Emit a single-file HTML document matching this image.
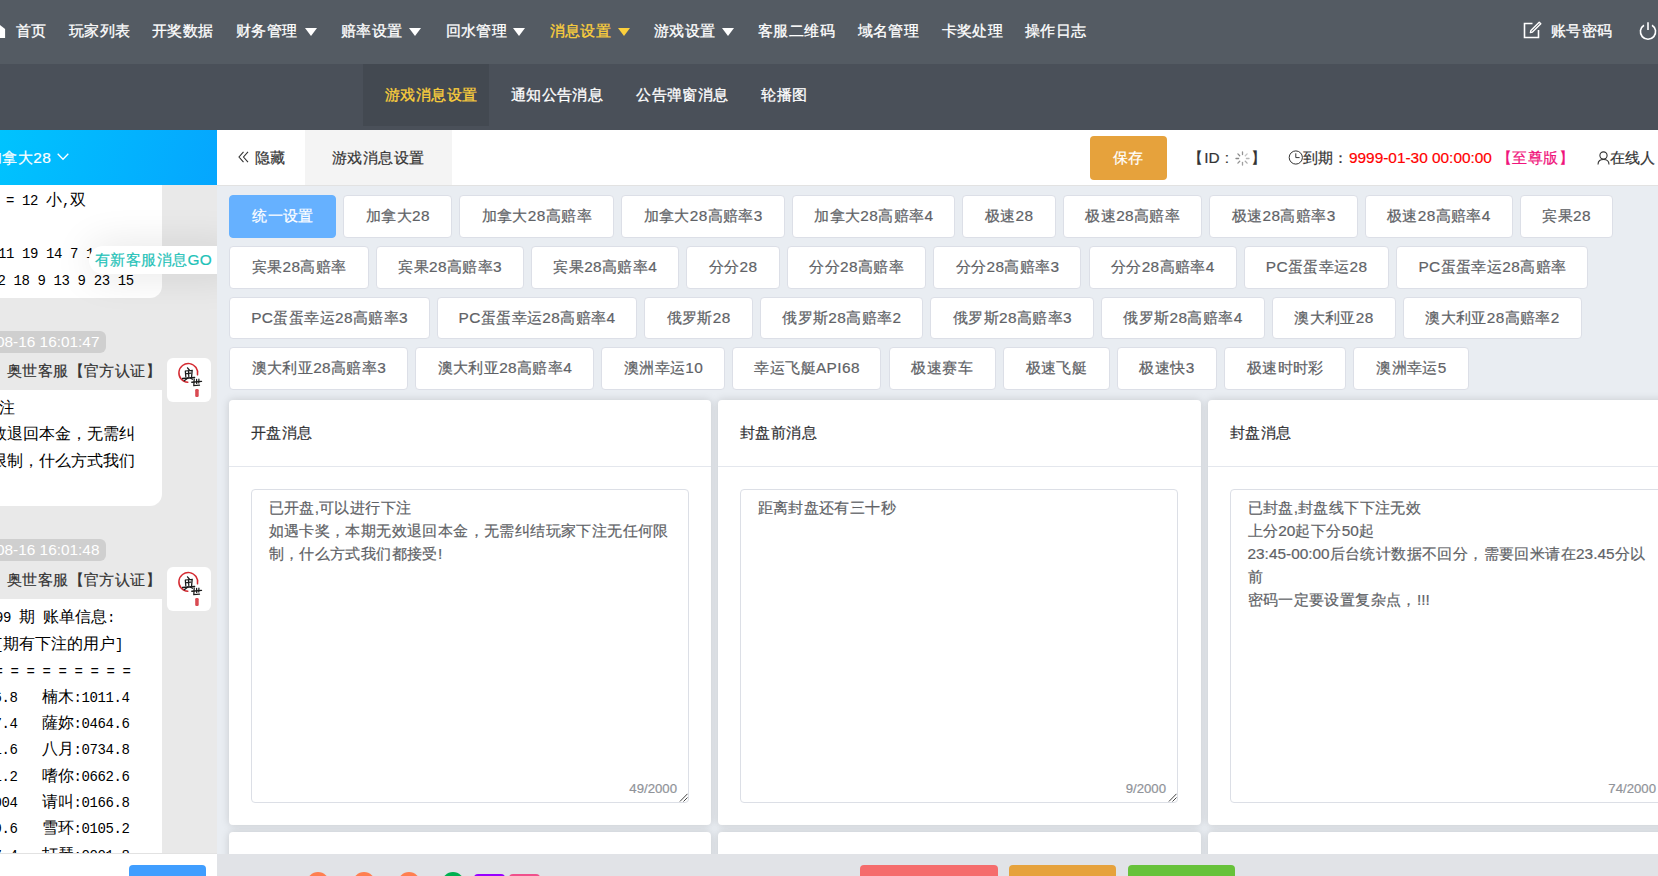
<!DOCTYPE html>
<html><head><meta charset="utf-8">
<style>
*{box-sizing:border-box;margin:0;padding:0}
html,body{width:1658px;height:876px;overflow:hidden;background:#e9edf2;font-family:"Liberation Sans",sans-serif;font-size:15.4px;color:#333;-webkit-text-stroke:0.2px currentColor}
.ml{-webkit-text-stroke:0}
.abs{position:absolute;white-space:nowrap}
.ls{letter-spacing:0.4px}
#top{position:absolute;left:0;top:0;width:1658px;height:64px;background:#545b63}
.nv{position:absolute;top:20px;color:#fff;font-size:15.4px;-webkit-text-stroke:0.3px currentColor;line-height:22px;white-space:nowrap;letter-spacing:0.4px}
.nv.on{color:#fcd03c}
.tri{position:absolute;top:28px;width:0;height:0;border-left:6.5px solid transparent;border-right:6.5px solid transparent;border-top:8px solid #fff}
.tri.on{border-top-color:#fcd03c}
#sub{position:absolute;left:0;top:64px;width:1658px;height:66px;background:#4a5059}
#left{position:absolute;left:0;top:130px;width:217px;height:746px;background:#e9e9e9;overflow:hidden}
#lhead{position:absolute;left:0;top:0;width:217px;height:55px;background:linear-gradient(105deg,#00c3fe,#05a6fe);color:#fff}
.bub{position:absolute;left:0;width:162px;background:#fff;border-radius:0 0 12px 0}
.ml{position:absolute;white-space:pre;font-family:"Liberation Mono",monospace;font-size:14px;letter-spacing:-0.4px;line-height:22px;color:#000}
.ml i{font-style:normal;font-size:16px;letter-spacing:0;font-family:"Liberation Sans",sans-serif}
.pill{-webkit-text-stroke:0;position:absolute;left:-10px;width:115.5px;height:21.5px;background:#cfcfcf;border-radius:6px;color:#fff;font-size:15.4px;line-height:21.5px;text-align:right;padding-right:6px;white-space:nowrap}
.nm{position:absolute;left:7px;color:#333;white-space:nowrap;letter-spacing:0.4px;line-height:22px}
.av{position:absolute;left:167px;width:44px;height:44px;background:#fff;border-radius:6px}
#main{position:absolute;left:217px;top:130px;width:1441px;height:746px;overflow:hidden}
#tabbar{position:absolute;left:0;top:0;width:1441px;height:56px;background:#fff;border-bottom:1px solid #e2e2e2}
.btn{position:absolute;height:42.9px;line-height:40.9px;border:1px solid #dcdfe7;border-radius:4px;background:#fff;color:#606266;font-size:15.4px;text-align:center;white-space:nowrap;letter-spacing:0.4px;text-indent:0.4px}
.btn.pri{background:#66b1ff;border-color:#66b1ff;color:#fff}
.card{position:absolute;width:483px;background:#fff;border-radius:4px;box-shadow:0 0 9px rgba(0,0,0,.15)}
.card .hd{position:absolute;left:0;top:0;width:100%;height:67px;border-bottom:1px solid #e4e7ed}
.card .hd span{position:absolute;left:22px;top:22px;line-height:22px;color:#303133;letter-spacing:0.4px;white-space:nowrap}
.ta{position:absolute;left:22px;top:89px;width:438px;height:313.5px;border:1px solid #dcdfe6;border-radius:4px;padding:6px 16.5px;color:#606266;line-height:23.1px;font-size:15.4px;letter-spacing:0.4px;word-break:break-all}
.ta b{font-weight:normal;letter-spacing:0}
.cnt{position:absolute;right:11px;bottom:5.5px;font-size:13.2px;color:#909399;line-height:14px;letter-spacing:0}
.rz{position:absolute;right:0;bottom:0;width:10px;height:10px}
#foot{position:absolute;left:217px;top:854px;width:1441px;height:22px;background:#e1e3e7}
</style></head><body>
<div id="top">
  <svg class="abs" style="left:-8px;top:20px" width="14" height="19" viewBox="0 0 14 19"><path d="M6 3.6 L13.1 8.9 V18 H0 V8.9 Z" fill="#fff"/></svg>
  <div class="nv" style="left:16px">首页</div>
  <div class="nv" style="left:69px">玩家列表</div>
  <div class="nv" style="left:152px">开奖数据</div>
  <div class="nv" style="left:236px">财务管理</div><div class="tri" style="left:304.5px"></div>
  <div class="nv" style="left:341px">赔率设置</div><div class="tri" style="left:408.8px"></div>
  <div class="nv" style="left:445.5px">回水管理</div><div class="tri" style="left:513.4px"></div>
  <div class="nv on" style="left:549.7px">消息设置</div><div class="tri on" style="left:618.2px"></div>
  <div class="nv" style="left:654px">游戏设置</div><div class="tri" style="left:722.4px"></div>
  <div class="nv" style="left:758px">客服二维码</div>
  <div class="nv" style="left:857.6px">域名管理</div>
  <div class="nv" style="left:941.6px">卡奖处理</div>
  <div class="nv" style="left:1025px">操作日志</div>
  <svg class="abs" style="left:1523px;top:21px" width="19" height="18" viewBox="0 0 19 18"><path d="M9.5 2.5 H1.5 V16.5 H15.5 V9" fill="none" stroke="#fff" stroke-width="1.6"/><path d="M16.2 1.2 L17.8 2.8 L9.5 11.1 L7.4 11.6 L7.9 9.5 Z" fill="none" stroke="#fff" stroke-width="1.4" stroke-linejoin="round"/></svg>
  <div class="nv" style="left:1551px">账号密码</div>
  <svg class="abs" style="left:1638px;top:21px" width="20" height="20" viewBox="0 0 20 20"><path d="M6 4.2 A7.6 7.6 0 1 0 14 4.2" fill="none" stroke="#fff" stroke-width="1.6"/><path d="M10 1.2 V9" stroke="#fff" stroke-width="1.6"/></svg>
</div>
<div id="sub">
  <div class="abs" style="left:363px;top:0;width:126px;height:62px;background:#434951"></div>
  <div class="nv on" style="left:385px;top:20px">游戏消息设置</div>
  <div class="nv" style="left:510.8px;top:20px">通知公告消息</div>
  <div class="nv" style="left:636.3px;top:20px">公告弹窗消息</div>
  <div class="nv" style="left:761.4px;top:20px">轮播图</div>
</div>

<div id="left">
  <div id="lhead"><span class="abs ls" style="left:-13px;top:17px;line-height:22px">加拿大28</span>
    <svg class="abs" style="left:57px;top:23px" width="12" height="8" viewBox="0 0 12 8"><path d="M0.7 0.8 L6 6.3 L11.3 0.8" fill="none" stroke="#fff" stroke-width="1.3"/></svg></div>
  <div class="bub" style="top:55px;height:113px"></div>
  <div class="bub" style="top:260px;height:115.6px"></div>
  <div class="bub" style="top:469px;height:300px;border-radius:0"></div>
<div class="ml" style="left:6.0px;top:58.5px">= 12 <i>小</i>,<i>双</i></div>
<div class="ml" style="left:-2.0px;top:112.5px">11 19 14 7 1</div>
<div class="ml" style="left:-2.4px;top:139.5px">2 18 9 13 9 23 15</div>
<div class="ml" style="left:-1.5px;top:266.5px"><i>注</i></div>
<div class="ml" style="left:-8.7px;top:293.0px"><i>效退回本金，无需纠</i></div>
<div class="ml" style="left:-8.7px;top:319.5px"><i>限制，什么方式我们</i></div>
<div class="ml" style="left:-5.0px;top:476.0px">99 <i>期</i> <i>账单信息</i>:</div>
<div class="ml" style="left:-5.0px;top:502.5px">[<i>期有下注的用户</i>]</div>
<div class="ml" style="left:-5.5px;top:530.5px">= = = = = = = = =</div>
<div class="ml" style="left:-6.5px;top:555.7px">6.8   <i>楠木</i>:1011.4</div>
<div class="ml" style="left:-6.5px;top:582.0px">7.4   <i>薩妳</i>:0464.6</div>
<div class="ml" style="left:-6.5px;top:608.3px">1.6   <i>八月</i>:0734.8</div>
<div class="ml" style="left:-6.5px;top:634.6px">1.2   <i>嗜你</i>:0662.6</div>
<div class="ml" style="left:-6.5px;top:660.9px">004   <i>请叫</i>:0166.8</div>
<div class="ml" style="left:-6.5px;top:687.2px">9.6   <i>雪环</i>:0105.2</div>
<div class="ml" style="left:-6.5px;top:713.5px">7.4   <i>打琴</i>:0001.8</div>
  <div class="abs" style="left:89px;top:116px;width:150px;height:28px;background:#fff;border-radius:14px 0 0 14px;box-shadow:0 0 40px rgba(0,0,0,.12)"></div>
  <div class="abs ls" style="left:95px;top:118.5px;color:#1fc2b8;line-height:22px">有新客服消息GO</div>
  <div class="pill" style="top:201px">08-16 16:01:47</div>
  <div class="nm" style="top:230px">奥世客服【官方认证】</div>
  <div class="av" style="top:228px"><svg width="44" height="44" viewBox="0 0 44 44"><path d="M30.5 16.8 A9.4 9.4 0 1 0 20.8 24.3" fill="none" stroke="#d21f26" stroke-width="1.5" stroke-linecap="round" opacity=".95"/><g fill="none" stroke="#1a1a1a" stroke-width="1.25" stroke-linecap="round"><path d="M20.5 9.8 L22.3 12"/><path d="M18.3 13 L18.8 18.8 M18.3 13 L25.2 12.4 L24.6 18.6"/><path d="M19.6 15.6 L23.8 15.2 M21.5 13.2 L21.8 18.5"/><path d="M15.6 20.6 L27.6 19.4" stroke-width="1.5"/><path d="M21.2 19.8 L17.3 22.8 M23.2 20 L25.5 21.3"/><path d="M24.8 24.3 L34.5 23.4" stroke-width="1.4"/><path d="M27.2 21 L26.8 27.6 L32.5 27.2 M29.6 21.3 L29.7 25.4 M31.9 21.2 L31.8 25"/></g><rect x="28.2" y="31" width="3.5" height="8" rx="1.2" fill="#d94a52"/></svg></div>
  <div class="pill" style="top:409px">08-16 16:01:48</div>
  <div class="nm" style="top:439px">奥世客服【官方认证】</div>
  <div class="av" style="top:437px"><svg width="44" height="44" viewBox="0 0 44 44"><path d="M30.5 16.8 A9.4 9.4 0 1 0 20.8 24.3" fill="none" stroke="#d21f26" stroke-width="1.5" stroke-linecap="round" opacity=".95"/><g fill="none" stroke="#1a1a1a" stroke-width="1.25" stroke-linecap="round"><path d="M20.5 9.8 L22.3 12"/><path d="M18.3 13 L18.8 18.8 M18.3 13 L25.2 12.4 L24.6 18.6"/><path d="M19.6 15.6 L23.8 15.2 M21.5 13.2 L21.8 18.5"/><path d="M15.6 20.6 L27.6 19.4" stroke-width="1.5"/><path d="M21.2 19.8 L17.3 22.8 M23.2 20 L25.5 21.3"/><path d="M24.8 24.3 L34.5 23.4" stroke-width="1.4"/><path d="M27.2 21 L26.8 27.6 L32.5 27.2 M29.6 21.3 L29.7 25.4 M31.9 21.2 L31.8 25"/></g><rect x="28.2" y="31" width="3.5" height="8" rx="1.2" fill="#d94a52"/></svg></div>
  <div class="abs" style="left:0;top:723px;width:217px;height:23px;background:#fff;border-top:1px solid #e2e2e2"></div>
  <div class="abs" style="left:129px;top:735px;width:77px;height:30px;background:#409eff;border-radius:4px"></div>
</div>

<div id="main">
  <div id="tabbar">
    <div class="abs" style="left:88px;top:0;width:147px;height:55px;background:#f4f4f4"></div>
    <svg class="abs" style="left:21px;top:21px" width="11" height="12" viewBox="0 0 11 12"><path d="M5.5 0.8 L1 6 L5.5 11.2 M10 0.8 L5.5 6 L10 11.2" fill="none" stroke="#333" stroke-width="1.1"/></svg>
    <span class="abs ls" style="left:38px;top:17px;line-height:22px">隐藏</span>
    <span class="abs ls" style="left:115px;top:17px;line-height:22px">游戏消息设置</span>
    <div class="abs" style="left:873px;top:6px;width:77px;height:44px;background:#e6a23c;border-radius:4px;color:#fff;text-align:center;line-height:44px;letter-spacing:0.4px">保存</div>
    <span class="abs" style="left:971px;top:17px;line-height:22px;color:#333">【</span>
    <span class="abs" style="left:987.3px;top:17px;line-height:22px;color:#333">ID</span>
    <span class="abs" style="left:1007.8px;top:17px;line-height:22px;color:#333">:</span>
    <svg class="abs" style="left:1018px;top:20.5px" width="15" height="15" viewBox="0 0 15 15"><g stroke="#888" stroke-width="1.3" stroke-linecap="round"><path d="M7.5 1 V3.6" opacity=".9"/><path d="M12.1 2.9 L10.3 4.7" opacity=".5"/><path d="M14 7.5 H11.4" opacity=".6"/><path d="M12.1 12.1 L10.3 10.3" opacity=".7"/><path d="M7.5 14 V11.4" opacity=".8"/><path d="M2.9 12.1 L4.7 10.3" opacity=".9"/><path d="M1 7.5 H3.6"/><path d="M2.9 2.9 L4.7 4.7"/></g></svg>
    <span class="abs" style="left:1033.7px;top:17px;line-height:22px;color:#333">】</span>
    <svg class="abs" style="left:1071px;top:19.5px" width="16" height="16" viewBox="0 0 16 16"><circle cx="7.8" cy="7.5" r="6.6" fill="none" stroke="#333" stroke-width="1"/><path d="M7.8 3.3 V7.6 H11.6" fill="none" stroke="#333" stroke-width="1"/></svg>
    <span class="abs ls" style="left:1085.5px;top:17px;line-height:22px;color:#333">到期：</span>
    <span class="abs" style="left:1132px;top:17px;line-height:22px;color:#f00">9999-01-30 00:00:00</span>
    <span class="abs ls" style="left:1280px;top:17px;line-height:22px;color:#f0147c">【至尊版】</span>
    <svg class="abs" style="left:1380px;top:21px" width="13" height="14" viewBox="0 0 13 14"><circle cx="6.5" cy="4.5" r="3.6" fill="none" stroke="#333" stroke-width="1.1"/><path d="M1 13.5 C1 9.5 3.5 8.5 6.5 8.5 C9.5 8.5 12 9.5 12 13.5" fill="none" stroke="#333" stroke-width="1.1"/></svg>
    <span class="abs ls" style="left:1392.5px;top:17px;line-height:22px;color:#333">在线人</span>
  </div>
<div class="btn pri" style="left:12.2px;top:65.3px;width:107.1px">统一设置</div>
<div class="btn" style="left:126.3px;top:65.3px;width:108.8px">加拿大28</div>
<div class="btn" style="left:242.1px;top:65.3px;width:155.0px">加拿大28高赔率</div>
<div class="btn" style="left:404.2px;top:65.3px;width:163.6px">加拿大28高赔率3</div>
<div class="btn" style="left:574.8px;top:65.3px;width:163.6px">加拿大28高赔率4</div>
<div class="btn" style="left:745.3px;top:65.3px;width:93.4px">极速28</div>
<div class="btn" style="left:845.8px;top:65.3px;width:139.6px">极速28高赔率</div>
<div class="btn" style="left:992.4px;top:65.3px;width:148.2px">极速28高赔率3</div>
<div class="btn" style="left:1147.6px;top:65.3px;width:148.2px">极速28高赔率4</div>
<div class="btn" style="left:1302.8px;top:65.3px;width:93.4px">宾果28</div>
<div class="btn" style="left:12.2px;top:115.9px;width:139.6px">宾果28高赔率</div>
<div class="btn" style="left:158.8px;top:115.9px;width:148.2px">宾果28高赔率3</div>
<div class="btn" style="left:314.0px;top:115.9px;width:148.2px">宾果28高赔率4</div>
<div class="btn" style="left:469.2px;top:115.9px;width:93.4px">分分28</div>
<div class="btn" style="left:569.6px;top:115.9px;width:139.6px">分分28高赔率</div>
<div class="btn" style="left:716.3px;top:115.9px;width:148.2px">分分28高赔率3</div>
<div class="btn" style="left:871.5px;top:115.9px;width:148.2px">分分28高赔率4</div>
<div class="btn" style="left:1026.7px;top:115.9px;width:145.6px">PC蛋蛋幸运28</div>
<div class="btn" style="left:1179.3px;top:115.9px;width:191.8px">PC蛋蛋幸运28高赔率</div>
<div class="btn" style="left:12.2px;top:166.5px;width:200.4px">PC蛋蛋幸运28高赔率3</div>
<div class="btn" style="left:219.6px;top:166.5px;width:200.4px">PC蛋蛋幸运28高赔率4</div>
<div class="btn" style="left:427.0px;top:166.5px;width:108.8px">俄罗斯28</div>
<div class="btn" style="left:542.8px;top:166.5px;width:163.6px">俄罗斯28高赔率2</div>
<div class="btn" style="left:713.4px;top:166.5px;width:163.6px">俄罗斯28高赔率3</div>
<div class="btn" style="left:884.0px;top:166.5px;width:163.6px">俄罗斯28高赔率4</div>
<div class="btn" style="left:1054.6px;top:166.5px;width:124.2px">澳大利亚28</div>
<div class="btn" style="left:1185.8px;top:166.5px;width:179.0px">澳大利亚28高赔率2</div>
<div class="btn" style="left:12.2px;top:217.1px;width:179.0px">澳大利亚28高赔率3</div>
<div class="btn" style="left:198.2px;top:217.1px;width:179.0px">澳大利亚28高赔率4</div>
<div class="btn" style="left:384.2px;top:217.1px;width:124.2px">澳洲幸运10</div>
<div class="btn" style="left:515.4px;top:217.1px;width:149.1px">幸运飞艇API68</div>
<div class="btn" style="left:671.5px;top:217.1px;width:107.1px">极速赛车</div>
<div class="btn" style="left:785.6px;top:217.1px;width:107.1px">极速飞艇</div>
<div class="btn" style="left:899.7px;top:217.1px;width:100.3px">极速快3</div>
<div class="btn" style="left:1006.9px;top:217.1px;width:122.5px">极速时时彩</div>
<div class="btn" style="left:1136.4px;top:217.1px;width:115.7px">澳洲幸运5</div>
  <div class="card" style="left:12px;top:270px;height:425px;width:482px"><div class="hd"><span>开盘消息</span></div><div class="ta">已开盘<b>,</b>可以进行下注<br>如遇卡奖，本期无效退回本金，无需纠结玩家下注无任何限制，什么方式我们都接受<b>!</b><span class="cnt">49/2000</span><svg class="rz" width="10" height="10" viewBox="0 0 10 10"><path d="M1.9 9.5 L9.5 1.8 M5.5 9.5 L9.5 5.5" stroke="#444" stroke-width="1"/></svg></div></div>
  <div class="card" style="left:501px;top:270px;height:425px"><div class="hd"><span>封盘前消息</span></div><div class="ta">距离封盘还有三十秒<span class="cnt">9/2000</span><svg class="rz" width="10" height="10" viewBox="0 0 10 10"><path d="M1.9 9.5 L9.5 1.8 M5.5 9.5 L9.5 5.5" stroke="#444" stroke-width="1"/></svg></div></div>
  <div class="card" style="left:991px;top:270px;height:425px"><div class="hd"><span>封盘消息</span></div><div class="ta">已封盘<b>,</b>封盘线下下注无效<br>上分<b>20</b>起下分<b>50</b>起<br><b>23:45-00:00</b>后台统计数据不回分，需要回米请在<b>23.45</b>分以前<br>密码一定要设置复杂点，<b>!!!</b><span class="cnt">74/2000</span><svg class="rz" width="10" height="10" viewBox="0 0 10 10"><path d="M1.9 9.5 L9.5 1.8 M5.5 9.5 L9.5 5.5" stroke="#444" stroke-width="1"/></svg></div></div>
  <div class="card" style="left:12px;top:702px;height:100px;width:482px"></div>
  <div class="card" style="left:501px;top:702px;height:100px"></div>
  <div class="card" style="left:991px;top:702px;height:100px"></div>
</div>
<div id="foot">
  <div class="abs" style="left:90px;top:17.5px;width:22px;height:22px;border-radius:50%;background:#ff7f50"></div>
  <div class="abs" style="left:135.5px;top:17.5px;width:22px;height:22px;border-radius:50%;background:#ff7f50"></div>
  <div class="abs" style="left:180.5px;top:17.5px;width:22px;height:22px;border-radius:50%;background:#ff7f50"></div>
  <div class="abs" style="left:225px;top:17.5px;width:22px;height:22px;border-radius:50%;background:#00b050"></div>
  <div class="abs" style="left:256.5px;top:19.5px;width:31.5px;height:22px;border-radius:4px;background:#9900ff"></div>
  <div class="abs" style="left:291.7px;top:19.5px;width:31px;height:22px;border-radius:4px;background:#f0508c"></div>
  <div class="abs" style="left:643px;top:11px;width:138px;height:30px;border-radius:4px;background:#f56c6c"></div>
  <div class="abs" style="left:792.4px;top:11px;width:107px;height:30px;border-radius:4px;background:#e6a23c"></div>
  <div class="abs" style="left:911px;top:11px;width:107px;height:30px;border-radius:4px;background:#67c23a"></div>
</div>
</body></html>
